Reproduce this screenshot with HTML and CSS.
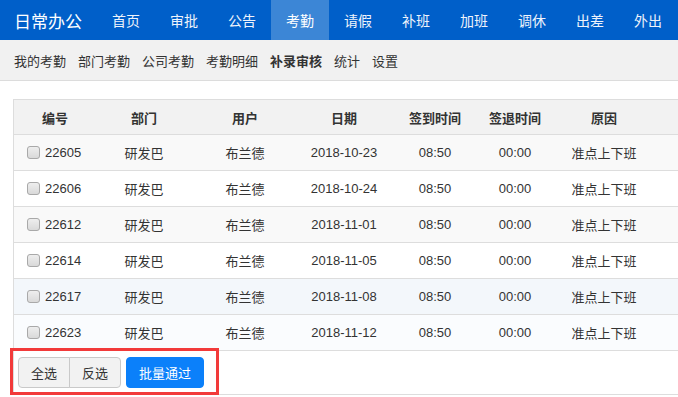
FILE: index.html
```html
<!DOCTYPE html>
<html lang="zh-CN">
<head>
    <meta charset="UTF-8">
    <meta name="viewport" content="width=device-width, initial-scale=1.0">
    <title>补录审核</title>
    <link rel="stylesheet" href="styles.css">
</head>
<body>
    <div class="topbar">
        <div class="brand">日常办公</div>
        <a class="nav-item" href="#">首页</a>
        <a class="nav-item" href="#">审批</a>
        <a class="nav-item" href="#">公告</a>
        <a class="nav-item active" href="#">考勤</a>
        <a class="nav-item" href="#">请假</a>
        <a class="nav-item" href="#">补班</a>
        <a class="nav-item" href="#">加班</a>
        <a class="nav-item" href="#">调休</a>
        <a class="nav-item" href="#">出差</a>
        <a class="nav-item" href="#">外出</a>
    </div>
    <div class="subnav">
        <a href="#">我的考勤</a>
        <a href="#">部门考勤</a>
        <a href="#">公司考勤</a>
        <a href="#">考勤明细</a>
        <a href="#" class="current">补录审核</a>
        <a href="#">统计</a>
        <a href="#">设置</a>
    </div>

    <div class="panel">
        <table class="grid">
            <colgroup>
                <col style="width: 82px">
                <col style="width: 96px">
                <col style="width: 106px">
                <col style="width: 92px">
                <col style="width: 90px">
                <col style="width: 70px">
                <col style="width: 108px">
                <col>
            </colgroup>
            <thead>
                <tr>
                    <th>编号</th>
                    <th>部门</th>
                    <th>用户</th>
                    <th>日期</th>
                    <th>签到时间</th>
                    <th>签退时间</th>
                    <th>原因</th>
                    <th></th>
                </tr>
            </thead>
            <tbody id="rows"></tbody>
        </table>
        <div class="toolbar">
            <div class="actions">
                <div class="btn-group">
                    <button class="btn">全选</button>
                    <button class="btn">反选</button>
                </div>
                <button class="btn btn-primary">批量通过</button>
            </div>
        </div>
    </div>

    <script>
        const records = [
            ['22605', '2018-10-23', 'odd'],
            ['22606', '2018-10-24', ''],
            ['22612', '2018-11-01', 'odd'],
            ['22614', '2018-11-05', ''],
            ['22617', '2018-11-08', 'hover'],
            ['22623', '2018-11-12', 'light']
        ];

        const tbody = document.getElementById('rows');

        records.forEach(([id, date, cls]) => {
            const tr = document.createElement('tr');
            if (cls) tr.classList.add(cls);
            tr.innerHTML = `
                <td class="id-cell"><label><input type="checkbox" class="check"><span>${id}</span></label></td>
                <td>研发巴</td>
                <td>布兰德</td>
                <td>${date}</td>
                <td>08:50</td>
                <td>00:00</td>
                <td>准点上下班</td>
                <td></td>`;
            tbody.appendChild(tr);
        });
    </script>
</body>
</html>
```

FILE: styles.css
```css
html, body {
    overflow: hidden;
}

body {
    margin: 0;
    font-family: "Liberation Sans", "Noto Sans CJK SC", sans-serif;
    font-size: 13px;
    color: #333;
    background: #fff;
}

a {
    text-decoration: none;
}

.topbar {
    display: flex;
    align-items: stretch;
    height: 40px;
    background: #005fc9;
    white-space: nowrap;
    overflow: hidden;
}

.brand {
    display: flex;
    align-items: center;
    padding: 0 15px 0 14px;
    font-size: 17px;
    color: #fff;
}

.nav-item {
    display: flex;
    align-items: center;
    padding: 0 15px;
    font-size: 14px;
    color: #eef3fb;
}

.nav-item.active {
    background: #3c86d6;
    color: #fff;
}

.subnav {
    display: flex;
    align-items: center;
    gap: 12px;
    height: 40px;
    padding: 0 14px;
    background: #f1f1f1;
    border-bottom: 1px solid #dcdcdc;
    white-space: nowrap;
}

.subnav a {
    color: #333;
}

.subnav a.current {
    font-weight: bold;
}

.panel {
    margin: 18px 0 0 13px;
    padding-bottom: 2px;
    border: 1px solid #dddddd;
    border-right: none;
}

.grid {
    width: 100%;
    table-layout: fixed;
    border-collapse: collapse;
}

.grid th {
    height: 34px;
    background: #f2f2f2;
    font-weight: bold;
    color: #333;
    text-align: center;
    border-bottom: 1px solid #dddddd;
    padding: 0;
}

.grid td {
    height: 35px;
    padding: 0;
    text-align: center;
    border-bottom: 1px solid #dddddd;
    color: #333;
    white-space: nowrap;
}

.grid tr.odd td {
    background: #f9f9f9;
}

.grid tr.hover td {
    background: #f3f7fb;
}

.grid tr.light td {
    background: #fafcfe;
}

.grid td.id-cell {
    text-align: left;
    padding-left: 13px;
}

.id-cell label {
    display: flex;
    align-items: center;
    gap: 5px;
}

.check {
    appearance: none;
    -webkit-appearance: none;
    width: 13px;
    height: 13px;
    margin: 0;
    border: 1px solid #a9a9a9;
    border-radius: 3px;
    background: linear-gradient(#eeeeee, #d9d9d9);
}

.toolbar {
    display: flex;
}

.actions {
    display: flex;
    gap: 5px;
    margin-left: -1px;
    padding: 6px 12px 4px 5px;
    outline: 3px solid #f23a3a;
}

.btn-group {
    display: flex;
}

.btn {
    height: 31px;
    padding: 0 12px;
    font-family: inherit;
    font-size: 13px;
    color: #333;
    background: #f2f2f2;
    border: 1px solid #c9c9c9;
    border-radius: 4px;
    cursor: pointer;
}

.btn-group .btn:first-child {
    border-top-right-radius: 0;
    border-bottom-right-radius: 0;
}

.btn-group .btn + .btn {
    margin-left: -1px;
    border-top-left-radius: 0;
    border-bottom-left-radius: 0;
}

.btn-primary {
    color: #fff;
    background: #0b80fa;
    border-color: #0b80fa;
}
```
